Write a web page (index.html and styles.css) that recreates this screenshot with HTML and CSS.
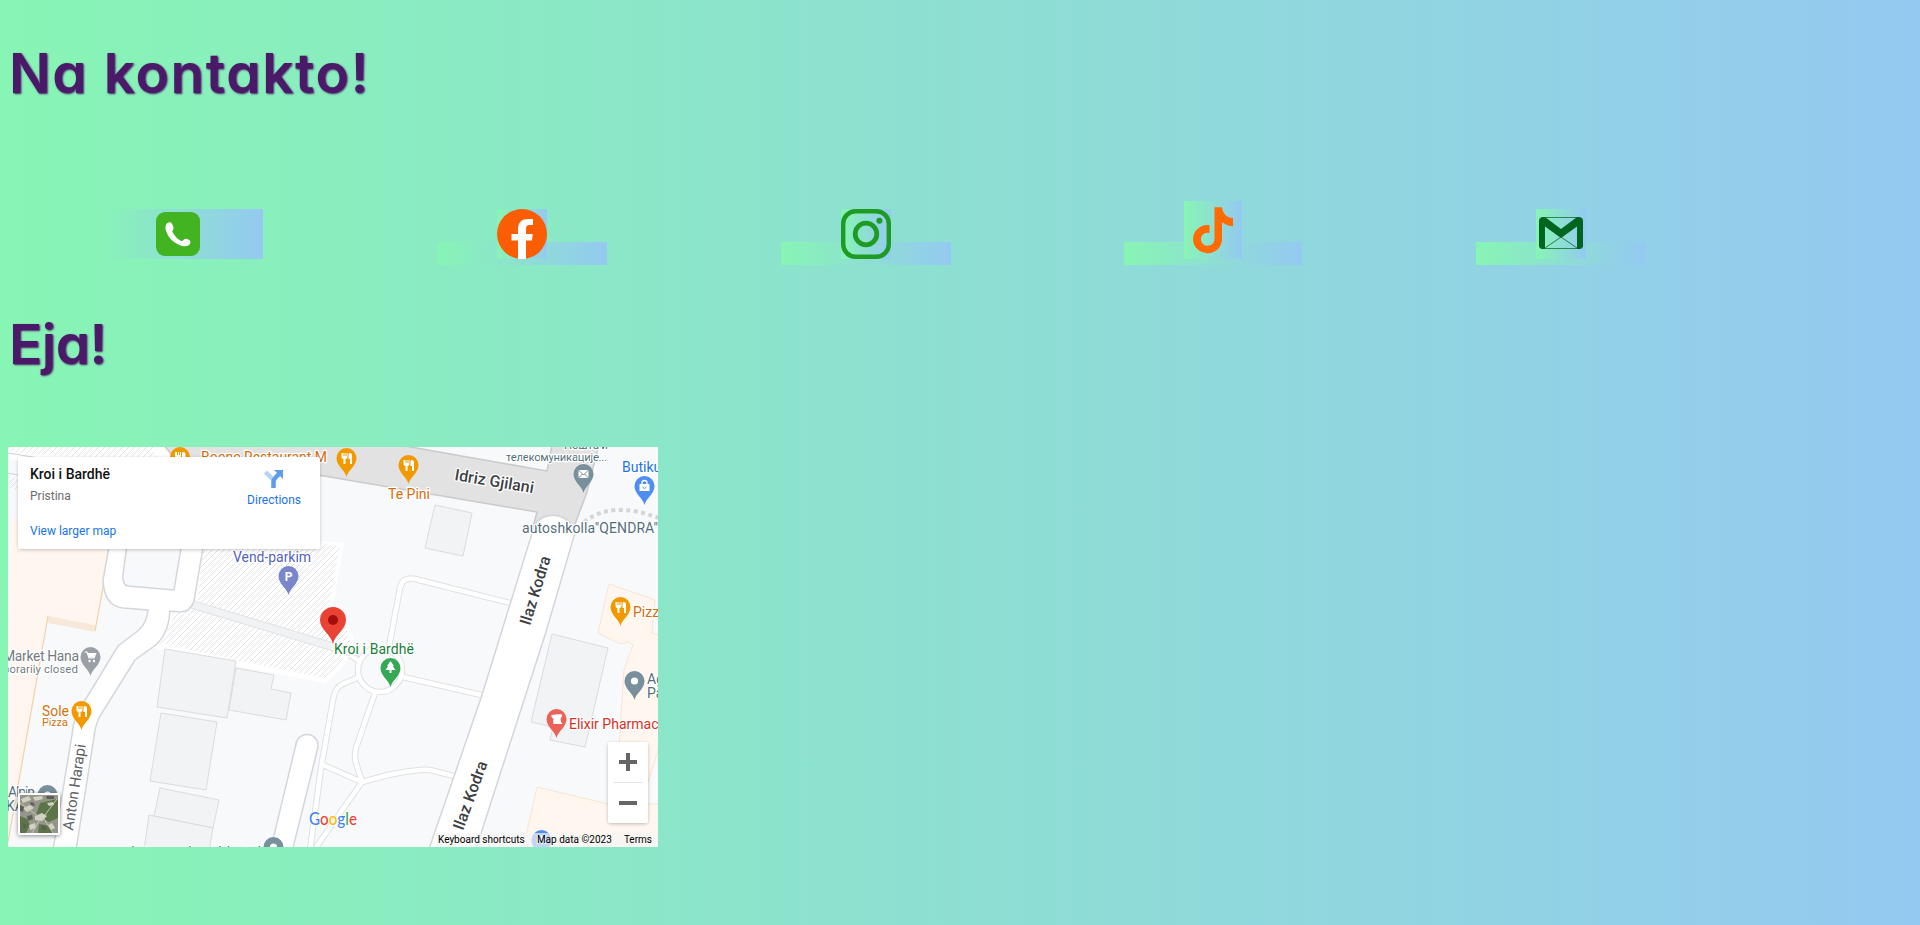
FILE: index.html
```html
<!DOCTYPE html>
<html lang="sq">
<head>
<meta charset="utf-8">
<title>Na kontakto!</title>
<link rel="stylesheet" href="styles.css">
</head>
<body>
<h1 class="title">Na kontakto!</h1>

<div class="contacts">
  <a class="contact contact-tall">
    <svg class="icon" viewBox="0 0 50 50"><rect x="3" y="3" width="44" height="44" rx="9" fill="#43b421"/><path d="M15.500 13.500q3.500-1 5 5c.4 2.500-2 3-.8 5q3.500 6.200 8.500 8.500c2 .6 2.300-2.700 5-2.200q5 1 4.200 4.200c-1 3.500-5.500 3.700-9 2.700C20 34 14.500 28 12.700 20.500c-.7-3 .3-6.300 2.800-7z" fill="#fff"/></svg>
  </a>
  <a class="contact">
    <svg class="icon raised" viewBox="0 0 50 50"><circle cx="25" cy="25" r="25" fill="#fb5e02"/><path d="M21 50V31.500h-6.500V25H21v-4.500C21 13 25 10 31 10h5v6h-3.500c-2.700 0-3.500 1.500-3.500 4v5h6.800l-.9 6.500H29V50z" fill="#fff"/></svg>
  </a>
  <a class="contact">
    <svg class="icon raised" viewBox="0 0 50 50" fill="none" stroke="#1e9b23"><rect x="2.200" y="2.200" width="45.600" height="45.600" rx="12.500" stroke-width="4.400"/><circle cx="25" cy="25" r="10.800" stroke-width="4.800"/><circle cx="38.400" cy="11.700" r="3" fill="#1e9b23" stroke="none"/></svg>
  </a>
  <a class="contact contact-wide">
    <svg class="icon raised icon-large" viewBox="0 0 58 58"><path d="M30.500 6.200H38c.5 5.500 4 10.300 11 11v8c-4-.2-8-1.600-11-4V38c0 8-6 14.200-14.200 14.200S9 46 9 38.300c0-8.800 7.500-15.300 16.500-14.300v8c-5-1.200-8.500 2-8.500 6.200 0 4 3 6.600 6.800 6.600 4 0 6.700-3 6.700-7z" fill="#ff6b00"/></svg>
  </a>
  <a class="contact contact-mail">
    <svg class="icon raised" viewBox="0 0 50 50"><rect x="3.500" y="8.500" width="43" height="31" rx="3" fill="none" stroke="#2d8552" stroke-width="1"/><path d="M9 39l16-11 16 11" fill="none" stroke="#267b46" stroke-width="1"/><path d="M3 12.500Q3 8 8 8h1l16 12L41 8h1q5 0 5 4.500V36q0 4-4 4h-2V17.500L25 29 9 17.500V40H7q-4 0-4-4z" fill="#00651e"/></svg>
  </a>
</div>

<h1 class="title title-second">Eja!</h1>

<div class="map">
  <svg class="map-canvas" viewBox="8 447 650 400">
    <defs>
      <pattern id="hatch" width="6" height="6" patternUnits="userSpaceOnUse"><path d="M-1 7L7-1M-1 1L1-1M5 7L7 5" stroke="#d8dbde" stroke-width=".8"/></pattern>
      <path id="pin" d="M0 19C-1.500 12-10 8-10 0a10 10 0 0 1 20 0C10 8 1.500 12 0 19z"/>
      <path id="fork" d="M-5-5v4q0 2 2 2v5h2v-5q2 0 2-2v-4h-1v3h-1v-3h-1v3h-1v-3zM3-5q2.500 0 2.500 2v9h-2V1H2v-4q0-2 1-2z" fill="#fff"/>
    </defs>
    <path class="land" d="M8 447h650v400H8z"/>
    <path d="M8 447h155l20 30-80 0-95-18z" fill="#fff"/>
    <path d="M8 447h145l5 18-80-8L8 452z" fill="url(#hatch)"/>
    <path d="M8 453l100 16M8 473l30 6" stroke="#cfd2d6" fill="none"/>
    <path d="M8 475l12 5v10L8 488z" fill="url(#hatch)"/>
    <path class="beige" d="M10 519l100 10v20L95 631l-47-15L8 842z"/>
    <path d="M48 616l47 9v7l-47-9z" fill="#f8e8da"/>
    <path d="M110 549L95 631M48 616L8 842" stroke="#f3d3ac" stroke-width="1.300" fill="none"/>
    <path d="M204 530l140 13-11 64q17 13 21 33-2 22-29 43l-89-17-71-16-13-2 16-18 2-18h24z" fill="#fff"/>
    <path d="M204 530l136 16-11 61q17 16 21 33-2 20-25 38l-89-18-71-16-8 0 14-18 2-18h24z" fill="url(#hatch)"/>
    <path d="M194 601l143 43 22 8-2 6-24-7-142-43z" fill="#f0f2f3" stroke="#dadcde" stroke-width=".8"/>
    <path class="road" d="M112 530L103 580Q104 606 123 608L148 610Q147 622 139 630L118 646 84 702Q74 713 72 735L53 850H76L94 737Q95 726 100 716L135 660 157 644Q169 632 170 611L180 612Q190 612 194 601L206 530z"/>
    <path d="M129 530L123 574Q122 585 128 586L174 590 184 530z" fill="#f7f9fb" stroke="#d3d7dc" stroke-width="1.500"/>
    <g class="building">
      <path d="M165 649l71 12-9 57-70-11z"/><path d="M236 668l38 7-3 14 20 4-5 27-57-10z"/><path d="M161 713l56 9-11 68-56-9z"/><path d="M160 788l59 12-6 28-59-12z"/><path d="M149 815l64 13-4 24-65-2z"/><path d="M435 505l37 8-9 43-38-8z"/><path d="M552 634l56 14-23 99-35-7 3-13-22-5z"/>
    </g>
    <g class="beige" stroke="#f6dfc6" stroke-width=".8"><path d="M609 584l46 16-3 33 10 3v102l-14 44-30-18 6-94 9-25-5-3-8 2-22-11z"/><path d="M537 787l71 17h54v50h-140z"/></g>
    <path class="road" d="M270 852L296 744A11 11 0 0 1 318 747L292 852z"/>
    <g class="path-edge"><path d="M389 647L400 588Q403 576 415 579L514 604M403 677L486 696M359 677L343 684Q335 687 333 700L321 768 310 850M375 693L356 748Q354 756 356 763L362 782M321 764L362 782 388 775Q420 769 430 770L462 778M362 782L314 850M359 661L350 655"/><circle cx="380" cy="670" r="22"/></g>
    <g class="path-fill"><path d="M389 647L400 588Q403 576 415 579L514 604M403 677L486 696M359 677L343 684Q335 687 333 700L321 768 310 850M375 693L356 748Q354 756 356 763L362 782M321 764L362 782 388 775Q420 769 430 770L462 778M362 782L314 850M359 661L350 655"/><circle cx="380" cy="670" r="22"/></g>
    <path d="M160 440L172 455 324 476 537 512 533 527H574L587 492 600 440H553L547 471 405 446z" fill="#e2e2e2" stroke="#c9cacc" stroke-width="1.500"/>
    <path d="M532 528Q553 504 574 528L575 537 545 635 475 852H428L482 695z" fill="#fff"/>
    <path d="M428 852L482 695 533 530Q536 516 553 515 571 516 575 533L545 635 475 852" fill="none" stroke="#d3d7dc" stroke-width="1.500"/>
    <path d="M584 522Q612 500 658 518" fill="none" stroke="#d4d5d6" stroke-width="4" stroke-dasharray="4 3.500"/>

    <g transform="translate(180 457)"><use href="#pin" fill="#f29900"/><use href="#fork"/></g>
    <g transform="translate(346.500 458)"><use href="#pin" fill="#f29900"/><use href="#fork"/></g>
    <g transform="translate(408.500 465)"><use href="#pin" fill="#f29900"/><use href="#fork"/></g>
    <g transform="translate(620.500 607)"><use href="#pin" fill="#f29900"/><use href="#fork"/></g>
    <g transform="translate(81.500 711)"><use href="#pin" fill="#f29900"/><use href="#fork"/></g>
    <g transform="translate(583.500 474)"><use href="#pin" fill="#78909c"/><path d="M-5-4H5V4H-5z" fill="#fff"/><path d="M-5-4L0 1 5-4M-5 4L-1 0M5 4L1 0" fill="none" stroke="#78909c"/></g>
    <g transform="translate(644.500 486)"><use href="#pin" fill="#4f8df5"/><path d="M-5-2H5V5H-5z" fill="#fff"/><path d="M-2.500-2v-1a2.500 2.500 0 0 1 5 0v1" fill="none" stroke="#fff" stroke-width="1.300"/><path d="M-2 1q2 3 4 0" fill="none" stroke="#4f8df5"/></g>
    <g transform="translate(288.500 576)"><use href="#pin" fill="#7986cb"/><text class="parking" x="-3.800" y="5">P</text></g>
    <g transform="translate(390.500 668)"><use href="#pin" fill="#34a853"/><path d="M0-7l3.500 5H2.300L5 2 1 2v3h-2V2h-4l2.700-4h-1.200z" fill="#fff"/></g>
    <g transform="translate(556.500 719)"><use href="#pin" fill="#ec6158"/><path d="M-5-4l9-1 2 1-1 2-1 2q0 3 2 5h-9q-1-3 0-5l-2-2z" fill="#fff"/></g>
    <g transform="translate(634.500 681)"><use href="#pin" fill="#78909c"/><circle r="3.600" fill="#fff"/></g>
    <g transform="translate(90.500 657)"><use href="#pin" fill="#9aa0a6"/><path d="M-6-5h2.500l2 6h5l1.800-4.500h-8" fill="none" stroke="#fff" stroke-width="1.200"/><path d="M-2.500-3h7l-1.500 3.500h-4.500z" fill="#fff"/><circle cx="-1" cy="4" r="1.200" fill="#fff"/><circle cx="3.500" cy="4" r="1.200" fill="#fff"/></g>
    <g transform="translate(47.500 795)"><use href="#pin" fill="#78909c"/><circle r="3.600" fill="#fff"/></g>
    <g transform="translate(273.500 847)"><use href="#pin" fill="#78909c"/><circle r="3.600" fill="#fff"/></g>
    <g transform="translate(541.500 840)"><use href="#pin" fill="#4f8df5"/><path d="M-4-5v9M0-5v9M4-5v9" stroke="#fff" stroke-width="1.500"/></g>
    <path d="M333 644C331 634 320 630 320 620a13 13 0 0 1 26 0C346 630 335 634 333 644z" fill="#ea4335"/><circle cx="333" cy="620" r="5" fill="#a50e0e"/>

    <g class="labels">
      <g fill="#d56e0c"><text x="201" y="462" textLength="126">Boone Restaurant M</text><text x="388" y="499" textLength="42">Te Pini</text><text x="633" y="617">Pizza</text><text x="42" y="716" textLength="27">Sole</text><text class="small" x="42" y="726" textLength="26">Pizza</text></g>
      <g fill="#1a73e8"><text x="622" y="472">Butiku</text></g>
      <g fill="#546e7a"><text class="small" x="564" y="449" textLength="44">Пошта и</text><text class="small" x="506" y="461" textLength="101">телекомуникације...</text><text x="522" y="533" textLength="136">autoshkolla"QENDRA"</text><text x="647" y="684">Agj</text><text x="647" y="698">Par</text><text x="8" y="797" textLength="27">Alpin</text><text x="6" y="811">KA</text><text x="131" y="857" textLength="130">Internacional hotel</text></g>
      <g fill="#747b81"><text x="3" y="661" textLength="76">Market Hana</text><text class="small" x="3" y="673" textLength="75">porarily closed</text></g>
      <text x="233" y="562" textLength="78" fill="#5363bc">Vend-parkim</text>
      <text x="334" y="654" textLength="80" fill="#188038">Kroi i Bardhë</text>
      <text x="569" y="729" fill="#d93025">Elixir Pharmacy</text>
      <g class="street"><text transform="translate(454 480) rotate(9.500)" textLength="80">Idriz Gjilani</text><text transform="translate(530 626) rotate(-73)" textLength="71">Ilaz Kodra</text><text transform="translate(463 831) rotate(-70)" textLength="72">Ilaz Kodra</text></g>
      <text class="lane" transform="translate(73 831) rotate(-81.500)" textLength="87">Anton Harapi</text>
    </g>
    <g class="logo"><text x="309" y="825" textLength="48" lengthAdjust="spacingAndGlyphs"><tspan fill="#4285f4">G</tspan><tspan fill="#ea4335">o</tspan><tspan fill="#fbbc04">o</tspan><tspan fill="#4285f4">g</tspan><tspan fill="#34a853">l</tspan><tspan fill="#ea4335">e</tspan></text></g>
  </svg>

  <div class="place-card">
    <div class="place-info"><div class="place-name">Kroi i Bardhë</div><div class="place-city">Pristina</div><div class="place-link">View larger map</div></div>
    <div class="directions"><svg width="20" height="20" viewBox="0 0 20 20"><path d="M1.500 3L9 10.500" stroke="#b7d2f8" stroke-width="4.500"/><path d="M9.500 19v-6q0-2.500 2.500-5L15 5" fill="none" stroke="#5e9cee" stroke-width="4.500"/><path d="M10 1h9v9z" fill="#5e9cee"/></svg><span>Directions</span></div>
  </div>

  <div class="satellite"><svg viewBox="0 0 38 38"><path fill="#94968a" d="M0 0h38v38H0z"/><path fill="#5c7548" d="M20 8l18-4v19l-9 4-13-7zM0 21l7 3 3 6-4 8H0zM19 29l12 2 2 7H18z"/><path fill="#d2d1c4" d="M1 4l8-3 2 4-8 3zM13 2l9-1 1 3-8 2zM3 13l7-3 4 3-7 4zM15 21l7-3 5 3-5 5-7-1zM9 30l6-2 1 5-6 2zM27 8l6-1 1 3-5 1zM28 30l4-2 3 5-4 2z"/><path fill="#5c5e54" d="M0 10l4 2-1 5-3-1zM10 7l4 1 1 3-4-1zM7 21l5-1 1 4-5 2zM26 1h8v3h-7zM2 28l5 2-3 4zM22 30l5 2-2 4-4-2z"/><path d="M25 20L37 4M24 24l9 14M12 38l8-14M0 8l18 13" stroke="#c8c6b0" fill="none"/></svg></div>

  <div class="zoom"><span class="plus"></span><span class="divider"></span><span class="minus"></span></div>
  <div class="legal"><span>Keyboard shortcuts</span><span>Map data ©2023</span><span>Terms</span></div>
</div>
</body>
</html>
```
FILE: styles.css
```css
html { height: 100%; }
body {
  margin: 0;
  min-height: 925px;
  box-sizing: border-box;
  padding: 35px 8px 0;
  overflow: hidden;
  font-family: Inter, "Open Sans", sans-serif;
}
body, .contact, .icon { background: linear-gradient(to right, #87f5b4, #94c9f1); }
.contact-tall .icon { background: none; }

.title {
  margin: 0;
  height: 76px;
  padding-left: 1px;
  font-size: 55px;
  line-height: 76px;
  font-weight: 600;
  letter-spacing: 1.6px;
  font-feature-settings: "cv11";
  color: #4a1a69;
  text-shadow: 1px 1px 2px #4a1a69;
}
.title-second { margin-top: 41px; letter-spacing: -0.5px; }

.contacts {
  display: flex;
  align-items: flex-end;
  gap: 174px;
  height: 68px;
  margin-top: 86px;
  padding-left: 85px;
}
.contact {
  display: flex;
  justify-content: center;
  align-items: flex-end;
  width: 170px;
  height: 23px;
}
.contact-tall { height: 50px; margin-bottom: 6px; }
.contact-wide { width: 178px; margin: 0 -1px; }
.contact-mail { margin-left: 1px; }
.icon { width: 50px; height: 50px; flex: none; display: block; }
.raised { margin-bottom: 6px; }
.icon-large { width: 58px; height: 58px; }

.map {
  position: relative;
  width: 650px;
  height: 400px;
  margin-top: 65px;
  overflow: hidden;
  font-family: Roboto, sans-serif;
}
.map-canvas { display: block; width: 650px; height: 400px; }
.land { fill: #f7f9fb; }
.beige { fill: #fff7ef; }
.road { fill: #fff; stroke: #d3d7dc; stroke-width: 1.5; }
.building { fill: #f1f3f4; stroke: #dadcde; stroke-width: 1; }
.path-edge { fill: none; stroke: #dfe1e3; stroke-width: 6.5; }
.path-fill { fill: none; stroke: #fff; stroke-width: 4.5; }
.labels { font-size: 14px; stroke: #fff; stroke-width: 2.5px; stroke-linejoin: round; paint-order: stroke; }
.labels .small { font-size: 11.5px; }
.street { font-size: 16px; font-weight: 500; fill: #3c4043; }
.lane { font-size: 15px; fill: #5f6368; }
.parking { font-size: 12px; font-weight: 700; fill: #fff; }
.logo { font-family: Lato, sans-serif; font-size: 17px; font-weight: 500; stroke: #fff; stroke-width: 1.5px; paint-order: stroke; }

.place-card {
  position: absolute;
  left: 10px;
  top: 10px;
  width: 302px;
  height: 92px;
  box-sizing: border-box;
  padding: 8px 19px 0 12px;
  display: flex;
  justify-content: space-between;
  background: #fff;
  border-radius: 2px;
  box-shadow: 0 1px 4px -1px rgba(0, 0, 0, .35);
  font-size: 12px;
}
.place-name { font-size: 14px; line-height: 18px; font-weight: 500; color: #111; }
.place-city { margin-top: 5px; line-height: 16px; color: #6b6b6b; }
.place-link { margin-top: 19px; line-height: 16px; color: #1a73e8; }
.directions { display: flex; flex-direction: column; align-items: center; padding-top: 4px; color: #1a73e8; line-height: 16px; gap: 3px; }

.satellite {
  position: absolute;
  left: 10px;
  bottom: 12px;
  width: 38px;
  height: 38px;
  border: 2px solid #fff;
  border-radius: 2px;
  box-shadow: 0 1px 4px rgba(0, 0, 0, .45);
}
.satellite svg { display: block; }

.zoom {
  position: absolute;
  right: 10px;
  bottom: 24px;
  width: 40px;
  height: 81px;
  display: grid;
  grid-template-rows: 40px 1px 40px;
  place-items: center;
  background: #fff;
  border-radius: 2px;
  box-shadow: 0 1px 4px -1px rgba(0, 0, 0, .4);
}
.divider { width: 30px; height: 1px; background: #e6e6e6; }
.minus { width: 18px; height: 4px; background: #666; }
.plus { width: 18px; height: 18px; background: linear-gradient(#666, #666) center / 18px 4px no-repeat, linear-gradient(#666, #666) center / 4px 18px no-repeat; }

.legal {
  position: absolute;
  right: 0;
  bottom: 0;
  width: 222px;
  height: 14px;
  box-sizing: border-box;
  padding: 0 6px 0 2px;
  display: flex;
  justify-content: space-between;
  background: rgba(245, 245, 245, .7);
  font-size: 10px;
  line-height: 14px;
  color: #000;
}
```
